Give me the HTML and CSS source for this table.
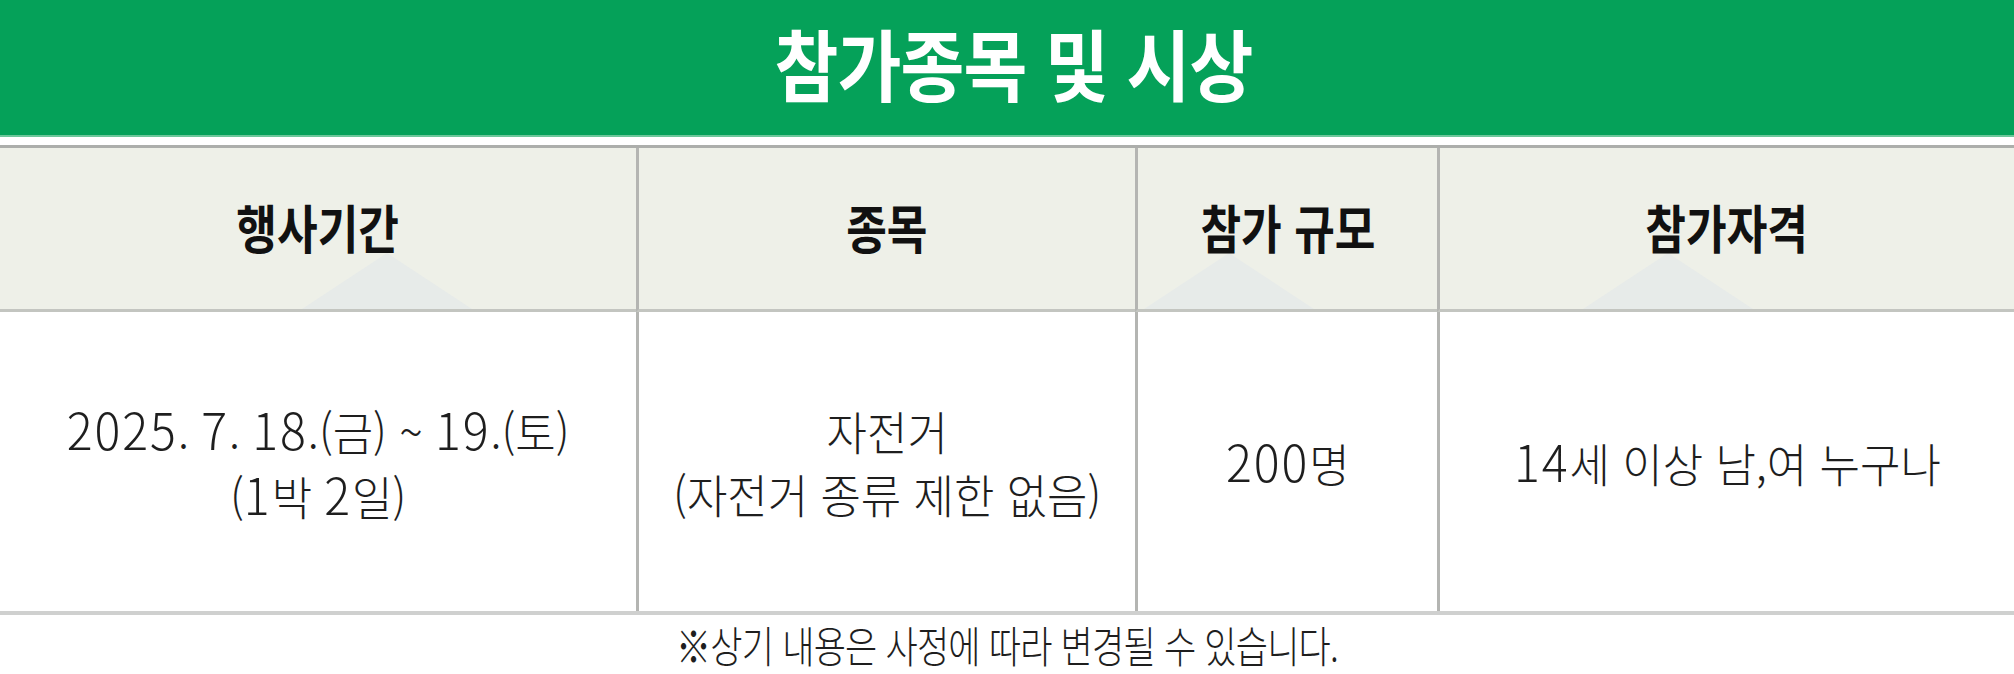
FILE: index.html
```html
<!DOCTYPE html>
<html lang="ko">
<head>
<meta charset="utf-8">
<title>참가종목 및 시상</title>
<link rel="stylesheet" href="styles.css">
</head>
<body>
<div class="page">
  <header class="banner">
    <h1 class="title"><span class="squeeze">참가종목 및 시상</span></h1>
  </header>
  <div class="table">
    <div class="th th-1"><span class="squeeze">행사기간</span><i class="tri"></i></div>
    <div class="th th-2"><span class="squeeze">종목</span></div>
    <div class="th th-3"><span class="squeeze">참가 규모</span><i class="tri"></i></div>
    <div class="th th-4"><span class="squeeze">참가자격</span><i class="tri"></i></div>

    <div class="td"><span class="body-text"><span class="num">2025</span>. <span class="num">7</span>. <span class="num">18</span>.(금) ~ <span class="num">19</span>.(토)<br>(<span class="num">1</span>박 <span class="num">2</span>일)</span></div>
    <div class="td"><span class="body-text">자전거<br>(자전거 종류 제한 없음)</span></div>
    <div class="td"><span class="body-text"><span class="num">200</span>명</span></div>
    <div class="td"><span class="body-text"><span class="num">14</span>세 이상 남,여 누구나</span></div>
  </div>
  <p class="note"><span class="note-text">※상기 내용은 사정에 따라 변경될 수 있습니다.</span></p>
</div>
</body>
</html>
```

FILE: styles.css
```css
html, body {
  margin: 0;
  padding: 0;
  background: #ffffff;
}

body {
  font-family: "Noto Sans CJK KR", "Noto Sans", sans-serif;
  color: #222;
}

.page {
  width: 2014px;
}

.banner {
  height: 135px;
  background: #05a159;
  border-bottom: 2px solid #6cc79a;
  display: flex;
  align-items: center;
  justify-content: center;
}

.title {
  margin: -12px 0 0 14px;
  font-size: 78px;
  font-weight: 700;
  color: #ffffff;
  line-height: 1;
  letter-spacing: -1px;
}

.title .squeeze {
  transform: scaleX(0.89);
}

.squeeze {
  display: inline-block;
}

.table {
  margin-top: 8px;
  display: grid;
  grid-template-columns: 636px 499px 302px 1fr;
  grid-template-rows: 164px 299px;
  border-top: 3px solid #acaeab;
  border-bottom: 4px solid #cfd0cf;
}

.th {
  position: relative;
  background: #eef0e8;
  border-bottom: 3px solid #c3c5c0;
  display: flex;
  align-items: center;
  justify-content: center;
  font-size: 52px;
  font-weight: 700;
  color: #111;
  overflow: hidden;
}

.th .squeeze {
  transform: scaleX(0.85);
  position: relative;
  z-index: 1;
  margin-top: -4px;
}

.th + .th,
.td + .td {
  border-left: 3px solid #b4b5b2;
}

.tri {
  position: absolute;
  bottom: 0;
  width: 0;
  height: 0;
  border-left: 85px solid transparent;
  border-right: 85px solid transparent;
  border-bottom: 56px solid #e7ebe9;
}

.th-1 .tri { left: 302px; }
.th-3 .tri { left: 6px; }
.th-4 .tri { left: 143px; }

.td {
  display: flex;
  align-items: center;
  justify-content: center;
  text-align: center;
}

.body-text {
  display: inline-block;
  font-size: 46px;
  font-weight: 300;
  line-height: 63px;
  color: #1e1e1e;
  transform: scaleX(0.955);
  white-space: nowrap;
}

.num {
  font-size: 1.1em;
  letter-spacing: 2px;
}

.note {
  margin: 0;
  height: 59px;
  display: flex;
  align-items: center;
  justify-content: center;
}

.note-text {
  display: inline-block;
  font-size: 43px;
  line-height: 1.3;
  font-weight: 300;
  color: #1e1e1e;
  transform: scaleX(0.815);
  white-space: nowrap;
  letter-spacing: -1px;
}
```
